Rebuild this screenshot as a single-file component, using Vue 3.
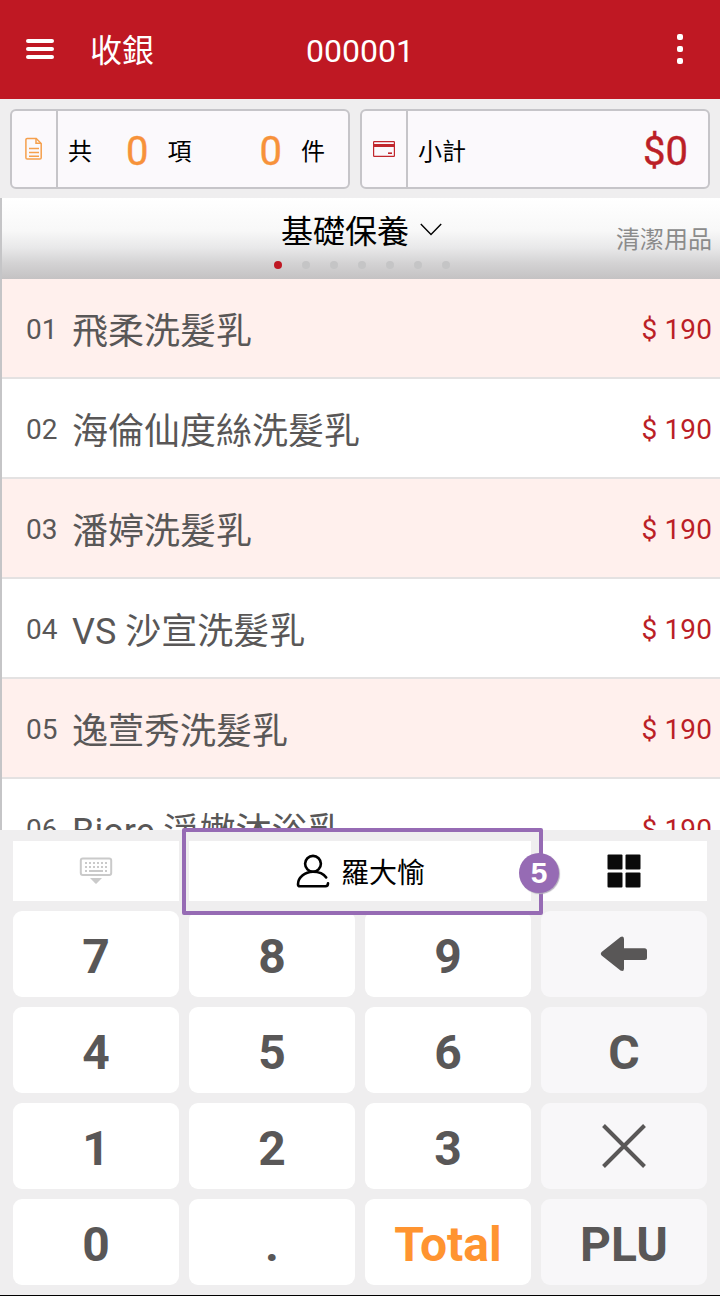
<template>
  <div class="pos">
    <header class="topbar">
      <button class="menu-button" aria-label="menu">
        <span></span>
        <span></span>
        <span></span>
      </button>
      <h1 class="title">收銀</h1>
      <div class="order-no">{{ orderNo }}</div>
      <button class="more-button" aria-label="more">
        <span></span>
        <span></span>
        <span></span>
      </button>
    </header>

    <section class="summary">
      <div class="summary-box">
        <div class="summary-icon">
          <svg width="18" height="24" viewBox="0 0 18 24" fill="none" stroke="#f5a04c" stroke-width="1.5">
            <path d="M2.200 1.500h9l5 5v14.200a1.300 1.300 0 0 1-1.300 1.300H2.200a1.300 1.300 0 0 1-1.300-1.300V2.800a1.300 1.300 0 0 1 1.300-1.300z" />
            <path d="M11 1.500v4.800h5M4 11.400h10M4 15.400h10M4 19.200h10" />
          </svg>
        </div>
        <div class="summary-counts">
          <span>共</span>
          <b class="count">{{ items }}</b>
          <span>項</span>
          <b class="count count-last">{{ pieces }}</b>
          <span>件</span>
        </div>
      </div>
      <div class="summary-box">
        <div class="summary-icon">
          <svg width="22" height="16" viewBox="0 0 22 16">
            <rect x=".6" y=".6" width="20.800" height="14.800" rx=".6" fill="none" stroke="#c1272d" stroke-width="1.200" />
            <path d="M1 3h20v3H1z" fill="#c1272d" />
            <path d="M15 12.200h4" stroke="#c1272d" stroke-width="1.600" />
          </svg>
        </div>
        <div class="summary-total">
          <span>小計</span>
          <b class="amount">${{ subtotal }}</b>
        </div>
      </div>
    </section>

    <section class="catalog">
      <div class="category">
        <div class="category-current">
          <span>基礎保養</span>
          <svg width="22" height="13" viewBox="0 0 22 13" fill="none" stroke="#000" stroke-width="1.400">
            <path d="M.8 1l10.200 10.400L21.200 1" />
          </svg>
        </div>
        <div class="category-next">清潔用品</div>
        <div class="dots">
          <i v-for="n in 7" :key="n" :class="{ active: n === currentPage }"></i>
        </div>
      </div>
      <ul class="products">
        <li v-for="product in products" :key="product.no" class="product">
          <span class="product-no">{{ product.no }}</span>
          <span class="product-name">{{ product.name }}</span>
          <span class="product-price">$ {{ product.price }}</span>
        </li>
      </ul>
    </section>

    <section class="keypad">
      <div class="tool">
        <svg width="34" height="28" viewBox="0 0 34 28">
          <rect x="1.800" y="1.500" width="30.400" height="16.400" rx="2" fill="none" stroke="#cacaca" stroke-width="2" />
          <path
            d="M6 6h22M6 10h22M6 14h2.200M26 14h2"
            stroke="#cacaca"
            stroke-width="2"
            stroke-dasharray="2 2"
          />
          <path d="M10 14h14" stroke="#cacaca" stroke-width="2" />
          <path d="M11 21h12l-5.400 5.500q-.6.6-1.200 0z" fill="#cacaca" />
        </svg>
      </div>
      <div class="tool tool-member">
        <svg width="34" height="34" viewBox="0 0 34 34" fill="none" stroke="#000" stroke-width="2.600" stroke-linecap="round" stroke-linejoin="round">
          <circle cx="17" cy="9.800" r="7.900" />
          <path d="M30.200 23.500C27.500 19.600 22.500 17.700 17 17.700C8.700 17.700 2 23.800 2 30.200C2 31.600 2.700 32.300 4 32.300H29.500C31 32.300 32 31.200 32 29.300" />
        </svg>
        <span>羅大愉</span>
        <div class="highlight">
          <span class="badge">5</span>
        </div>
      </div>
      <div class="tool">
        <svg width="34" height="34" viewBox="0 0 34 34" fill="#0a0a0a">
          <rect x=".5" y=".5" width="15" height="15" rx="1" />
          <rect x="18.500" y=".5" width="15" height="15" rx="1" />
          <rect x=".5" y="18.500" width="15" height="15" rx="1" />
          <rect x="18.500" y="18.500" width="15" height="15" rx="1" />
        </svg>
      </div>

      <button v-for="key in keys" :key="key.label" class="key" :class="key.type">
        <svg v-if="key.label === 'back'" width="48" height="36" viewBox="0 0 48 36" fill="#595757">
          <path d="M1.600 16L20.500.9Q24 -.6 24 3V12.200H44.500Q47 12.200 47 14.700V21.500Q47 24 44.500 24H24V32.500Q24 36.200 20.500 34.600L1.600 19.500Q0 17.800 1.600 16z" />
        </svg>
        <svg v-else-if="key.label === 'times'" width="44" height="44" viewBox="0 0 44 44" stroke="#595757" stroke-width="4">
          <path d="M1.500 1.500l41 41M42.500 1.500l-41 41" />
        </svg>
        <span v-else>{{ key.label }}</span>
      </button>
    </section>
  </div>
</template>

<script setup>
import { ref } from 'vue'

const orderNo = ref('000001')
const items = ref(0)
const pieces = ref(0)
const subtotal = ref(0)
const currentPage = ref(1)

const products = [
  { no: '01', name: '飛柔洗髮乳', price: 190 },
  { no: '02', name: '海倫仙度絲洗髮乳', price: 190 },
  { no: '03', name: '潘婷洗髮乳', price: 190 },
  { no: '04', name: 'VS 沙宣洗髮乳', price: 190 },
  { no: '05', name: '逸萱秀洗髮乳', price: 190 },
  { no: '06', name: 'Biore 淨嫩沐浴乳', price: 190 }
]

const keys = [
  { label: '7' },
  { label: '8' },
  { label: '9' },
  { label: 'back', type: 'fn' },
  { label: '4' },
  { label: '5' },
  { label: '6' },
  { label: 'C', type: 'fn' },
  { label: '1' },
  { label: '2' },
  { label: '3' },
  { label: 'times', type: 'fn' },
  { label: '0' },
  { label: '.' },
  { label: 'Total', type: 'total' },
  { label: 'PLU', type: 'fn' }
]
</script>

<style>
body {
  margin: 0;
  background: #efeeef;
}
</style>

<style scoped>
.pos {
  display: flex;
  flex-direction: column;
  width: 720px;
  height: 1296px;
  box-sizing: border-box;
  border-bottom: 1px solid #000;
  overflow: hidden;
  background: #efeeef;
  font-family: Roboto, 'Noto Sans CJK SC', sans-serif;
  color: #000;
}

button {
  border: 0;
  padding: 0;
  background: none;
  font-family: inherit;
}

/* header */
.topbar {
  display: grid;
  grid-template-columns: 90px 172px 196px 1fr 80px;
  align-items: center;
  height: 99px;
  box-sizing: border-box;
  padding-bottom: 1px;
  flex: none;
  background: #bf1823;
  color: #fff;
}

.menu-button {
  display: flex;
  flex-direction: column;
  gap: 4px;
  width: 28px;
  margin-left: 26px;
}

.menu-button span {
  height: 4px;
  border-radius: 2px;
  background: #fff;
}

.title {
  margin: 4px 0 0;
  font-size: 32px;
  font-weight: 400;
  line-height: 40px;
}

.order-no {
  margin-top: 3px;
  font-size: 32px;
  line-height: 40px;
  text-align: center;
}

.more-button {
  grid-column: 5;
  display: flex;
  flex-direction: column;
  align-items: center;
  gap: 6px;
}

.more-button span {
  width: 6px;
  height: 6px;
  border-radius: 2px;
  background: #fff;
}

/* summary */
.summary {
  display: grid;
  grid-template-columns: 340px 350px;
  gap: 10px;
  flex: none;
  height: 99px;
  box-sizing: border-box;
  padding: 10px 10px 9px;
}

.summary-box {
  display: flex;
  box-sizing: border-box;
  border: 2px solid #c6c5c9;
  border-radius: 6px;
  background: #fbf9fc;
  font-size: 24px;
}

.summary-icon {
  display: flex;
  align-items: center;
  justify-content: center;
  width: 44px;
  border-right: 2px solid #c6c5c9;
}

.summary-counts,
.summary-total {
  display: flex;
  flex: 1;
  align-items: center;
  padding-left: 10px;
}

.count,
.amount {
  padding-top: 4px;
  font-size: 40px;
  font-weight: 400;
  -webkit-text-stroke: 0.4px;
}

.count {
  margin: 0 19px 0 34px;
  color: #f7923a;
}

.count-last {
  margin-left: 68px;
}

.summary-total {
  justify-content: space-between;
  padding-right: 20px;
}

.amount {
  color: #bb1f27;
}

/* product list */
.catalog {
  flex: none;
  height: 632px;
  box-sizing: border-box;
  border-left: 2px solid #c5c5c7;
  overflow: hidden;
  background: #fff;
}

.category {
  position: relative;
  height: 81px;
  background: linear-gradient(#fff 0%, #f8f8f8 40%, #e8e8e9 62%, #d4d3d4 80%, #c4c2c3 100%);
}

.category-current {
  display: flex;
  align-items: center;
  justify-content: center;
  gap: 11px;
  height: 63px;
  padding-left: 1px;
  font-size: 32px;
}

.category-current span {
  margin-top: -2px;
}

.category-next {
  position: absolute;
  top: 24px;
  right: 8px;
  color: #8b8b8b;
  font-size: 24px;
  line-height: 36px;
}

.dots {
  display: flex;
  justify-content: center;
  gap: 20px;
  padding-left: 2px;
}

.dots i {
  width: 8px;
  height: 8px;
  border-radius: 50%;
  background: #c5c5c6;
}

.dots .active {
  background: #bf1823;
}

.products {
  margin: 0;
  padding: 0;
  list-style: none;
}

.product {
  display: flex;
  align-items: center;
  height: 100px;
  box-sizing: border-box;
  padding: 0 8px 0 24px;
  border-bottom: 2px solid #e4e2e2;
  background: #fff;
  color: #595757;
}

.product:nth-child(odd) {
  background: #fff0ed;
}

.product-no {
  width: 46px;
  padding-top: 2px;
  font-size: 28px;
}

.product-name {
  flex: 1;
  padding-bottom: 1px;
  font-size: 36px;
}

.product-price {
  padding-top: 2px;
  color: #bb1f27;
  font-size: 28px;
  letter-spacing: 0.1px;
}

/* keypad */
.keypad {
  display: grid;
  grid-template-columns: repeat(4, 166px);
  grid-template-rows: 60px repeat(4, 86px);
  gap: 10px;
  padding: 11px 13px 10px;
}

.tool {
  display: flex;
  align-items: center;
  justify-content: center;
  background: #fff;
}

.tool-member {
  position: relative;
  grid-column: span 2;
  gap: 11px;
  padding-left: 1px;
  font-size: 28px;
}

.tool-member > span {
  margin-top: -1px;
}

.highlight {
  position: absolute;
  top: -13px;
  left: -7px;
  width: 353px;
  height: 79px;
  border: 4px solid #966bb4;
  border-radius: 2px;
}

.badge {
  position: absolute;
  top: 21px;
  right: -20px;
  width: 40px;
  height: 40px;
  border-radius: 50%;
  background: #966bb4;
  box-shadow: 1px 1px 1px #b5b0bd;
  color: #fff;
  font-family: 'Liberation Sans', Arial, sans-serif;
  font-size: 30px;
  font-weight: 700;
  line-height: 40px;
  text-align: center;
}

.key {
  display: flex;
  align-items: center;
  justify-content: center;
  border-radius: 9px;
  background: #fff;
  color: #595757;
  font-size: 48px;
  font-weight: 700;
}

.key span {
  padding-top: 4px;
}

.fn {
  background: #f8f7f9;
}

.total {
  color: #ff9430;
}
</style>
